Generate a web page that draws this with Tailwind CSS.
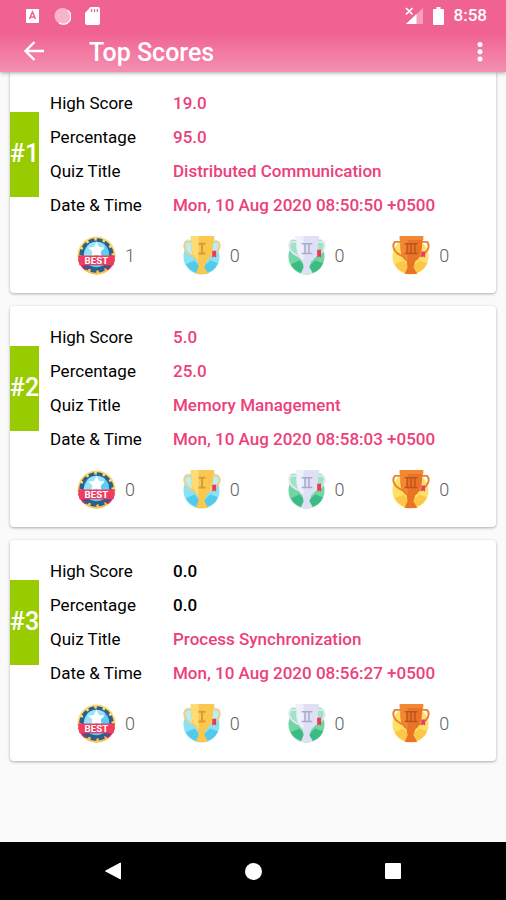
<!DOCTYPE html>
<html lang="en">
<head>
<meta charset="utf-8">
<meta name="viewport" content="width=device-width, initial-scale=1">
<title>Top Scores</title>
<script src="https://cdn.jsdelivr.net/npm/@tailwindcss/browser@4"></script>
</head>
<body class="flex min-h-screen flex-col bg-[#fafafa] font-[Roboto,sans-serif] text-[17px] text-black">

<!-- Shared award drawings -->
<svg class="hidden" aria-hidden="true">
  <symbol id="best" viewBox="0 0 40 40">
    <circle cx="20" cy="20" r="19.500" fill="#fbd970"/>
    <path d="M1 24h38a19.500 19.500 0 0 1-38 0z" fill="#e0206a"/>
    <path d="M8 35.500a19.500 19.500 0 0 0 24 0l-4-3H12z" fill="#fbc65a"/>
    <circle cx="20" cy="20" r="15.500" fill="#2d5f8b"/>
    <circle cx="20" cy="20" r="15.500" fill="none" stroke="#2d5f8b" stroke-width="4.500" stroke-dasharray="5.600 2.500"/>
    <circle cx="20" cy="19" r="13" fill="#5fccf5"/>
    <path d="M11 9.500a13 13 0 0 1 18 0L16 30a13 13 0 0 1-9-11z" fill="#98e2fb"/>
    <path d="M20 6l2.700 5.200 5.800.8-4.200 4 1 5.700-5.300-2.700-5.300 2.700 1-5.700-4.200-4 5.800-.8z" fill="#fff"/>
    <path d="M1 20h38l-1.500 10h-35z" fill="#f23b60"/>
    <text x="20" y="28.500" text-anchor="middle" font-family="Roboto, sans-serif" font-size="10" font-weight="700" fill="#fff">BEST</text>
  </symbol>
  <symbol id="gold" viewBox="0 0 40 40">
    <circle cx="20" cy="21" r="18.500" fill="#86e2f6"/>
    <path d="M12 6C7 1 1 4 2 10s6 9 11 12l7 13 7-13c5-3 10-6 11-12s-5-9-10-4" fill="#b4effa"/>
    <path d="M4 29a18.500 18.500 0 0 0 33-1l-8-3-9 8-7-8z" fill="#55c9ea"/>
    <path d="M11 6H4c-4 5 0 12 9 15M30 6h7c4 5 0 12-9 15" fill="none" stroke="#f6cb80" stroke-width="2"/>
    <path d="M9 0h24v4l-1 1c0 9-1 17-7 21l-2 6 4 7H14l3-7-1-6C10 22 9 15 10 5L9 4z" fill="#fbc84f"/>
    <path d="M9 0h8v25c-6-4-8-11-7-20L9 4z" fill="#fedb75"/>
    <path d="M17 8h7M17 18h7M20.500 8v10" stroke="#d99a38" stroke-width="2"/>
    <path d="M31 15h4v7l-2-1-2 1z" fill="#e83b55"/>
  </symbol>
  <symbol id="silver" viewBox="0 0 40 40">
    <circle cx="20" cy="21" r="18.500" fill="#72d6a2"/>
    <path d="M12 6C7 1 1 4 2 10s6 9 11 12l7 13 7-13c5-3 10-6 11-12s-5-9-10-4" fill="#9ce5bf"/>
    <path d="M4 29a18.500 18.500 0 0 0 33-1l-8-3-9 8-7-8z" fill="#3cbb84"/>
    <path d="M11 6H4c-4 5 0 12 9 15M30 6h7c4 5 0 12-9 15" fill="none" stroke="#e2e5f3" stroke-width="2"/>
    <path d="M9 0h24v4l-1 1c0 9-1 17-7 21l-2 6 4 7H14l3-7-1-6C10 22 9 15 10 5L9 4z" fill="#dfe0f3"/>
    <path d="M9 0h8v25c-6-4-8-11-7-20L9 4z" fill="#f0effc"/>
    <path d="M15 8h11M15 18h11M18.500 8v10M22.500 8v10" stroke="#a8aacb" stroke-width="1.500"/>
    <path d="M31 14h4v8l-2-1-2 1z" fill="#e83b55"/>
  </symbol>
  <symbol id="bronze" viewBox="0 0 40 40">
    <circle cx="20" cy="21" r="18.500" fill="#fee066"/>
    <path d="M4 29a18.500 18.500 0 0 0 33-1l-8-3-9 8-7-8z" fill="#fcc748"/>
    <path d="M11 6H4c-4 5 0 12 9 15M30 6h7c4 5 0 12-9 15" fill="none" stroke="#ea8130" stroke-width="2"/>
    <path d="M9 0h24v4l-1 1c0 9-1 17-7 21l-2 6 4 7H14l3-7-1-6C10 22 9 15 10 5L9 4z" fill="#ea7426"/>
    <path d="M9 0h24v4H17v21c-6-4-8-11-7-20L9 4z" fill="#f38832"/>
    <path d="M14 8h13M14 18h13M16.500 8v10M20.500 8v10M24.500 8v10" stroke="#bd531c" stroke-width="1.500"/>
    <path d="M31 16h4v6l-2-1-2 1z" fill="#e83b75"/>
  </symbol>
</svg>

<header class="sticky top-0 z-10 bg-linear-to-b from-[#f06292] from-45% to-[#f48fb1] text-white shadow-[0_1px_4px_rgba(0,0,0,0.35)]">
  <div class="flex h-8 items-center justify-between pr-[19px] pl-[25px]">
    <div class="flex items-center gap-[14px]">
      <svg class="h-4 w-[15px]" viewBox="0 0 15 16" aria-hidden="true"><rect x="1" y="1" width="13" height="14" rx="1" fill="#fff"/><path d="M4.500 11L7.500 4l3 7M5.500 9h4" fill="none" stroke="#f06292" stroke-width="1.500"/></svg>
      <svg class="size-[17px]" viewBox="0 0 17 17" aria-hidden="true"><circle cx="8.500" cy="8" r="8" fill="#f9b3cb"/><path d="M13.500 2.300a7.400 7.400 0 0 1-8.500 12.600" fill="none" stroke="#fff" stroke-width="1.300"/></svg>
      <svg class="h-[18px] w-[15px]" viewBox="0 0 15 18" aria-hidden="true"><path d="M5.500 0H13a2 2 0 0 1 2 2v14a2 2 0 0 1-2 2H2a2 2 0 0 1-2-2V6z" fill="#fff"/><path d="M6.500 2v3M9.500 2v3M12.300 2v3" stroke="#f06292" stroke-width="1.300"/></svg>
    </div>
    <div class="flex items-center gap-[10px]">
      <svg class="h-[18px] w-[18px]" viewBox="0 0 18 18" aria-hidden="true"><path d="M18 1v16H1z" fill="#fff" fill-opacity=".4"/><path d="M11.500 7v10H1z" fill="#fff"/><path d="M1 1l6.500 6.500M7.500 1L1 7.500" stroke="#fff" stroke-width="1.700"/></svg>
      <svg class="h-[18px] w-[11px]" viewBox="0 0 11 18" aria-hidden="true"><path d="M3.500 0h4v2H10a1 1 0 0 1 1 1v14a1 1 0 0 1-1 1H1a1 1 0 0 1-1-1V3a1 1 0 0 1 1-1h2.500z" fill="#fff"/></svg>
      <span class="font-medium">8:58</span>
    </div>
  </div>
  <div class="flex h-10 items-center pr-[14px] pl-[22px]">
    <button type="button" aria-label="Back" class="flex size-6 items-center justify-center">
      <svg class="size-6" viewBox="0 0 24 24" fill="none" stroke="#fff" stroke-width="2.400" aria-hidden="true"><path d="M22 11H4M12.500 2L3.500 11l9 9"/></svg>
    </button>
    <h1 class="ml-[43px] flex-1 pt-[2px] text-[25px] leading-8 font-medium">Top Scores</h1>
    <button type="button" aria-label="More options" class="flex h-6 w-6 items-center justify-center">
      <svg class="h-5 w-[6px]" viewBox="0 0 6 20" fill="#fff" aria-hidden="true"><circle cx="3" cy="2.500" r="2.500"/><circle cx="3" cy="9.700" r="2.500"/><circle cx="3" cy="17" r="2.500"/></svg>
    </button>
  </div>
</header>

<main class="flex flex-1 flex-col gap-[13px] px-[10px]">
  <article class="rounded-b-sm bg-white pt-[14px] pb-[18px] shadow-[0_1px_3px_rgba(0,0,0,0.32)]">
    <div class="flex items-center gap-[11px]">
      <div class="flex h-[85px] w-[29px] items-center justify-center bg-[#99cc00] text-[25px] font-medium text-white">#1</div>
      <dl class="grid flex-1 grid-cols-[123px_1fr] leading-[34px] whitespace-nowrap">
        <dt>High Score</dt><dd class="font-medium text-[#ec407a]">19.0</dd>
        <dt>Percentage</dt><dd class="font-medium text-[#ec407a]">95.0</dd>
        <dt>Quiz Title</dt><dd class="font-medium text-[#ec407a]">Distributed Communication</dd>
        <dt>Date &amp; Time</dt><dd class="font-medium text-[#ec407a]">Mon, 10 Aug 2020 08:50:50 +0500</dd>
      </dl>
    </div>
    <ul class="mt-[13px] grid grid-cols-4 pl-[67px] text-[18px] font-light text-[#616161]">
      <li class="flex h-10 items-center gap-[9px]"><svg class="size-[39px]" role="img" aria-label="Best"><use href="#best"/></svg>1</li>
      <li class="flex h-10 items-center gap-[9px]"><svg class="size-[39px]" role="img" aria-label="First place"><use href="#gold"/></svg>0</li>
      <li class="flex h-10 items-center gap-[9px]"><svg class="size-[39px]" role="img" aria-label="Second place"><use href="#silver"/></svg>0</li>
      <li class="flex h-10 items-center gap-[9px]"><svg class="size-[39px]" role="img" aria-label="Third place"><use href="#bronze"/></svg>0</li>
    </ul>
  </article>

  <article class="rounded-sm bg-white pt-[14px] pb-[18px] shadow-[0_1px_3px_rgba(0,0,0,0.32)]">
    <div class="flex items-center gap-[11px]">
      <div class="flex h-[85px] w-[29px] items-center justify-center bg-[#99cc00] text-[25px] font-medium text-white">#2</div>
      <dl class="grid flex-1 grid-cols-[123px_1fr] leading-[34px] whitespace-nowrap">
        <dt>High Score</dt><dd class="font-medium text-[#ec407a]">5.0</dd>
        <dt>Percentage</dt><dd class="font-medium text-[#ec407a]">25.0</dd>
        <dt>Quiz Title</dt><dd class="font-medium text-[#ec407a]">Memory Management</dd>
        <dt>Date &amp; Time</dt><dd class="font-medium text-[#ec407a]">Mon, 10 Aug 2020 08:58:03 +0500</dd>
      </dl>
    </div>
    <ul class="mt-[13px] grid grid-cols-4 pl-[67px] text-[18px] font-light text-[#616161]">
      <li class="flex h-10 items-center gap-[9px]"><svg class="size-[39px]" role="img" aria-label="Best"><use href="#best"/></svg>0</li>
      <li class="flex h-10 items-center gap-[9px]"><svg class="size-[39px]" role="img" aria-label="First place"><use href="#gold"/></svg>0</li>
      <li class="flex h-10 items-center gap-[9px]"><svg class="size-[39px]" role="img" aria-label="Second place"><use href="#silver"/></svg>0</li>
      <li class="flex h-10 items-center gap-[9px]"><svg class="size-[39px]" role="img" aria-label="Third place"><use href="#bronze"/></svg>0</li>
    </ul>
  </article>

  <article class="rounded-sm bg-white pt-[14px] pb-[18px] shadow-[0_1px_3px_rgba(0,0,0,0.32)]">
    <div class="flex items-center gap-[11px]">
      <div class="flex h-[85px] w-[29px] items-center justify-center bg-[#99cc00] text-[25px] font-medium text-white">#3</div>
      <dl class="grid flex-1 grid-cols-[123px_1fr] leading-[34px] whitespace-nowrap">
        <dt>High Score</dt><dd class="font-medium">0.0</dd>
        <dt>Percentage</dt><dd class="font-medium">0.0</dd>
        <dt>Quiz Title</dt><dd class="font-medium text-[#ec407a]">Process Synchronization</dd>
        <dt>Date &amp; Time</dt><dd class="font-medium text-[#ec407a]">Mon, 10 Aug 2020 08:56:27 +0500</dd>
      </dl>
    </div>
    <ul class="mt-[13px] grid grid-cols-4 pl-[67px] text-[18px] font-light text-[#616161]">
      <li class="flex h-10 items-center gap-[9px]"><svg class="size-[39px]" role="img" aria-label="Best"><use href="#best"/></svg>0</li>
      <li class="flex h-10 items-center gap-[9px]"><svg class="size-[39px]" role="img" aria-label="First place"><use href="#gold"/></svg>0</li>
      <li class="flex h-10 items-center gap-[9px]"><svg class="size-[39px]" role="img" aria-label="Second place"><use href="#silver"/></svg>0</li>
      <li class="flex h-10 items-center gap-[9px]"><svg class="size-[39px]" role="img" aria-label="Third place"><use href="#bronze"/></svg>0</li>
    </ul>
  </article>
</main>

<nav class="flex h-[58px] items-center justify-center bg-black" aria-label="System">
  <button type="button" aria-label="Back" class="flex h-12 w-[140px] items-center justify-center"><svg class="size-[18px]" viewBox="0 0 18 18" aria-hidden="true"><path d="M1.500 9L16.500 1v16z" fill="#fff" stroke="#fff" stroke-linejoin="round"/></svg></button>
  <button type="button" aria-label="Home" class="flex h-12 w-[140px] items-center justify-center"><span class="size-[17px] rounded-full bg-white"></span></button>
  <button type="button" aria-label="Recent apps" class="flex h-12 w-[140px] items-center justify-center"><span class="size-4 rounded-[1px] bg-white"></span></button>
</nav>
</body>
</html>
